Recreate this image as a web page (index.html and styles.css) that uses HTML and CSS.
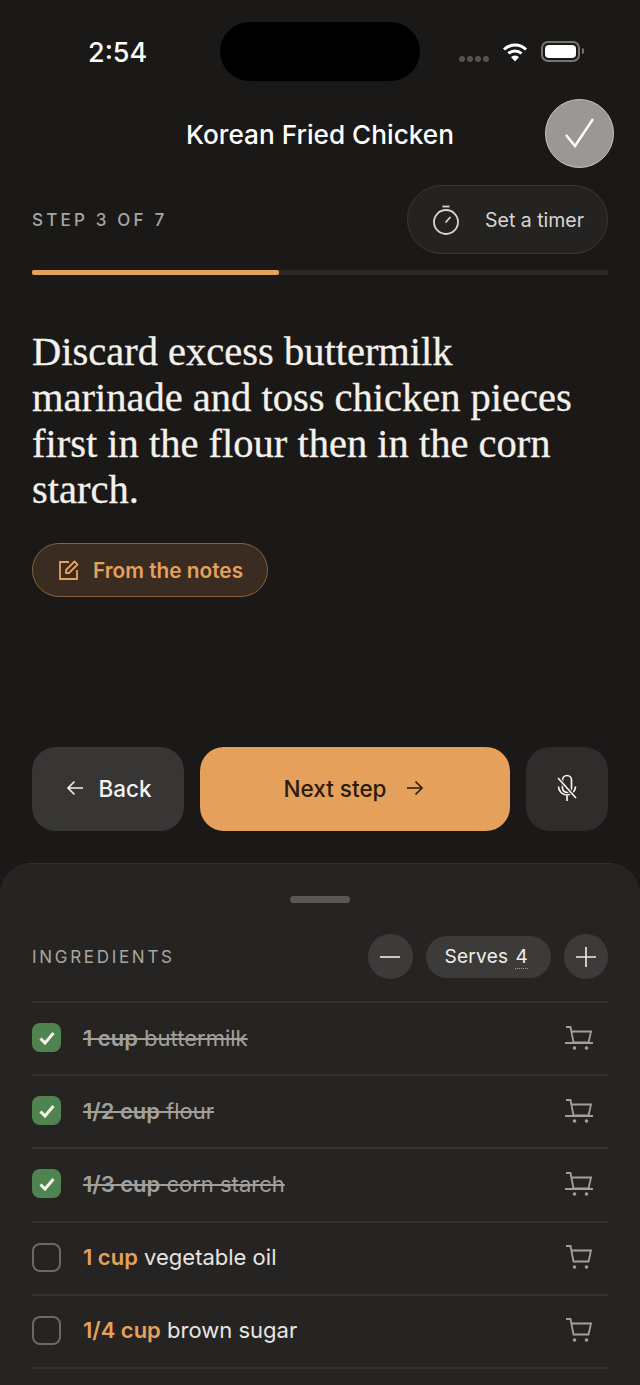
FILE: index.html
```html
<!DOCTYPE html>
<html lang="en">
<head>
  <meta charset="UTF-8" />
  <meta name="viewport" content="width=device-width, initial-scale=1.0"/>
  <title>Korean Fried Chicken</title>
  <link rel="stylesheet" href="styles.css">
</head>
<body>
  <div class="status-bar">
    <div class="status-time">2:54</div>
    <div class="island"></div>
    <div class="status-icons">
      <div class="signal"><i></i><i></i><i></i><i></i></div>
      <svg class="wifi" width="26" height="20" viewBox="0 0 26 20">
        <path d="M2 7.500a16 16 0 0 1 22 0" fill="none" stroke="#fff" stroke-width="3"/>
        <path d="M6.500 11.500a9.500 9.500 0 0 1 13 0" fill="none" stroke="#fff" stroke-width="3"/>
        <path d="M13 19.500l-4-4.500a6 6 0 0 1 8 0z" fill="#fff"/>
      </svg>
      <div class="battery"><span></span></div>
    </div>
  </div>

  <div class="title-bar">
    <h1 class="title">Korean Fried Chicken</h1>
    <button class="done-button">
      <svg width="36" height="36" viewBox="0 0 36 36" fill="none" stroke="#fff" stroke-width="2.4">
        <path d="M4 19l9 11L31 3"/>
      </svg>
    </button>
  </div>

  <div class="step-row">
    <div class="step-label">STEP 3 OF 7</div>
    <button class="timer-button">
      <svg width="28" height="32" viewBox="0 0 28 32" fill="none" stroke="#d9d6d2" stroke-width="1.8">
        <circle cx="14" cy="18" r="12"/>
        <path d="M10.500 2.500h7"/>
        <path d="M14 18l4-4.500" stroke-linecap="round"/>
      </svg>
      <span>Set a timer</span>
    </button>
  </div>

  <div class="progress"><div class="progress-fill" style="width: 42.9%"></div></div>

  <p class="step-text">Discard excess buttermilk marinade and toss chicken pieces first in the flour then in the corn starch.</p>

  <button class="notes-button">
    <svg width="22" height="22" viewBox="0 0 22 22" fill="none" stroke="#e5a05c" stroke-width="1.8">
      <path d="M11 3H2v17h17v-9"/>
      <path d="M8 11L16.500 2.500l3 3L11 14H8z" stroke-linejoin="round"/>
    </svg>
    <span>From the notes</span>
  </button>

  <div class="actions">
    <button class="action back-button">
      <svg width="18" height="16" viewBox="0 0 18 16" fill="none" stroke="#f5f3f0" stroke-width="1.6">
        <path d="M17 8H2M8.500 1.500L2 8l6.500 6.500"/>
      </svg>
      <span>Back</span>
    </button>
    <button class="action next-button">
      <span>Next step</span>
      <svg width="18" height="16" viewBox="0 0 18 16" fill="none" stroke="#2a1c0e" stroke-width="1.6">
        <path d="M1 8h15M9.500 1.500L16 8l-6.500 6.500"/>
      </svg>
    </button>
    <button class="action mic-button">
      <svg width="22" height="28" viewBox="0 0 22 28" fill="none" stroke="#f5f3f0" stroke-width="1.7">
        <rect x="6.500" y="1.500" width="9" height="17" rx="4.500"/>
        <path d="M2.500 12.500a8.500 8.500 0 0 0 17 0M11 21v6"/>
        <path d="M2 4l18 20" stroke="#2f2d2c" stroke-width="4"/>
        <path d="M2 4l18 20"/>
      </svg>
    </button>
  </div>

  <div class="sheet">
    <div class="sheet-handle"></div>
    <div class="sheet-head">
      <div class="sheet-label">INGREDIENTS</div>
      <div class="serves">
        <button class="round-button">
          <svg width="20" height="20" viewBox="0 0 20 20" stroke="#efedea" stroke-width="1.6"><path d="M0 10h20"/></svg>
        </button>
        <div class="serves-pill">Serves <span class="serves-count">4</span></div>
        <button class="round-button">
          <svg width="20" height="20" viewBox="0 0 20 20" stroke="#efedea" stroke-width="1.6"><path d="M0 10h20M10 0v20"/></svg>
        </button>
      </div>
    </div>

    <ul class="ingredients">
      <li class="ingredient checked">
        <span class="checkbox"><svg width="16" height="14" viewBox="0 0 16 14" fill="none" stroke="#f3f5e8" stroke-width="3"><path d="M1.500 7.500L6 12l8.500-10"/></svg></span>
        <span class="ingredient-text"><b>1 cup</b> buttermilk</span>
        <svg class="cart" width="30" height="24" viewBox="0 0 30 24"><use href="#cart-shape"/><path d="M1 17h28" stroke="#a3a09c" stroke-width="2"/></svg>
      </li>
      <li class="ingredient checked">
        <span class="checkbox"><svg width="16" height="14" viewBox="0 0 16 14" fill="none" stroke="#f3f5e8" stroke-width="3"><path d="M1.500 7.500L6 12l8.500-10"/></svg></span>
        <span class="ingredient-text"><b>1/2 cup</b> flour</span>
        <svg class="cart" width="30" height="24" viewBox="0 0 30 24"><use href="#cart-shape"/><path d="M1 17h28" stroke="#a3a09c" stroke-width="2"/></svg>
      </li>
      <li class="ingredient checked">
        <span class="checkbox"><svg width="16" height="14" viewBox="0 0 16 14" fill="none" stroke="#f3f5e8" stroke-width="3"><path d="M1.500 7.500L6 12l8.500-10"/></svg></span>
        <span class="ingredient-text"><b>1/3 cup</b> corn starch</span>
        <svg class="cart" width="30" height="24" viewBox="0 0 30 24"><use href="#cart-shape"/><path d="M1 17h28" stroke="#a3a09c" stroke-width="2"/></svg>
      </li>
      <li class="ingredient">
        <span class="checkbox"></span>
        <span class="ingredient-text"><b>1 cup</b> vegetable oil</span>
        <svg class="cart" width="30" height="24" viewBox="0 0 30 24"><use href="#cart-shape"/></svg>
      </li>
      <li class="ingredient">
        <span class="checkbox"></span>
        <span class="ingredient-text"><b>1/4 cup</b> brown sugar</span>
        <svg class="cart" width="30" height="24" viewBox="0 0 30 24"><use href="#cart-shape"/></svg>
      </li>
    </ul>
  </div>

  <svg class="defs" width="0" height="0">
    <defs>
      <g id="cart-shape">
        <path d="M2 1h4.500l3 15.500h15L27 5.500H7" fill="none" stroke="#a3a09c" stroke-width="1.8"/>
        <circle cx="10.500" cy="22" r="1.800" fill="#a3a09c"/>
        <circle cx="22.500" cy="22" r="1.800" fill="#a3a09c"/>
      </g>
    </defs>
  </svg>
</body>
</html>
```

FILE: styles.css
```css
html, body {
  margin: 0;
  padding: 0;
  height: 100%;
  overflow: hidden;
  background: #1a1918;
  color: #fff;
  font-family: 'Inter', 'Liberation Sans', sans-serif;
}

button {
  font-family: inherit;
  border: none;
  padding: 0;
  cursor: pointer;
}

/* status bar */
.status-bar {
  display: flex;
  align-items: center;
  height: 59px;
  padding: 22px 56px 0 88px;
}

.status-time {
  width: 132px;
  padding-top: 2px;
  font-size: 27px;
  font-weight: 500;
}

.island {
  width: 200px;
  height: 59px;
  border-radius: 30px;
  background: #000;
}

.status-icons {
  display: flex;
  align-items: center;
  margin-left: 39px;
}

.signal {
  display: flex;
  gap: 2px;
  margin-top: 14px;
  margin-right: 13px;
}

.signal i {
  width: 6px;
  height: 6px;
  border-radius: 50%;
  background: #55534f;
}

.wifi {
  margin-right: 13px;
}

.battery {
  position: relative;
  display: flex;
  box-sizing: border-box;
  width: 39px;
  height: 21px;
  padding: 2px;
  border: 2px solid #777572;
  border-radius: 7px;
}

.battery span {
  flex: 1;
  background: #fff;
  border-radius: 4px;
}

.battery::after {
  content: '';
  position: absolute;
  right: -6px;
  top: 5px;
  width: 2px;
  height: 6px;
  border-radius: 0 2px 2px 0;
  background: #777572;
}

/* title */
.title-bar {
  position: relative;
  display: flex;
  justify-content: center;
  padding-top: 37px;
}

.title {
  margin: 0;
  font-size: 26.2px;
  line-height: 34px;
  font-weight: 500;
}

.done-button {
  position: absolute;
  top: 18px;
  left: 545px;
  display: flex;
  align-items: center;
  justify-content: center;
  width: 69px;
  height: 69px;
  border-radius: 50%;
  background: #9a9794;
  border: 1px solid #c9c7c4;
  box-sizing: border-box;
}

/* step row */
.step-row {
  display: flex;
  align-items: center;
  justify-content: space-between;
  margin-top: 33px;
  padding: 0 32px;
}

.step-label {
  font-size: 17px;
  font-weight: 500;
  letter-spacing: 3.2px;
  color: #a9a6a2;
}

.timer-button {
  display: flex;
  align-items: center;
  gap: 25px;
  box-sizing: border-box;
  width: 201px;
  height: 69px;
  padding-left: 24px;
  border: 1px solid #3a3836;
  border-radius: 35px;
  background: #242322;
  color: #d9d6d2;
  font-size: 19.5px;
}

.progress {
  height: 5px;
  margin: 16px 32px 0;
  background: #2c2a29;
}

.progress-fill {
  height: 100%;
  background: #e5a05c;
  border-radius: 2px;
}

.step-text {
  margin: 54px 32px 0 32px;
  font-family: 'Liberation Serif', serif;
  font-size: 40.5px;
  line-height: 46px;
  color: #f4f1ec;
  -webkit-text-stroke: 0.3px #f4f1ec;
}

.notes-button {
  display: flex;
  align-items: center;
  gap: 13px;
  box-sizing: border-box;
  width: 236px;
  height: 54px;
  margin: 30px 0 0 32px;
  padding-left: 25px;
  border: 1px solid #87643f;
  border-radius: 27px;
  background: #3a2c20;
  color: #e5a05c;
  font-size: 20.8px;
  font-weight: 600;
}

/* actions */
.actions {
  display: flex;
  gap: 16px;
  margin-top: 150px;
  padding: 0 32px;
}

.action {
  display: flex;
  align-items: center;
  justify-content: center;
  height: 84px;
  padding-bottom: 2px;
  border-radius: 24px;
  font-size: 22.5px;
  font-weight: 500;
}

.back-button {
  width: 152px;
  gap: 14px;
  padding-left: 2px;
  background: #383635;
  color: #f5f3f0;
}

.next-button {
  width: 310px;
  gap: 19px;
  padding-right: 3px;
  background: #e5a05c;
  color: #2a1c0e;
}

.mic-button {
  width: 82px;
  background: #2f2d2c;
}

/* ingredients sheet */
.sheet {
  box-sizing: border-box;
  margin-top: 32px;
  height: 522px;
  padding: 0 32px;
  background: #262423;
  border-top: 1px solid #33312f;
  border-radius: 32px 32px 0 0;
}

.sheet-handle {
  width: 60px;
  height: 7px;
  margin: 32px auto 0;
  border-radius: 4px;
  background: #5a5855;
}

.sheet-head {
  display: flex;
  align-items: center;
  justify-content: space-between;
  height: 45px;
  margin-top: 31px;
}

.sheet-label {
  font-size: 17px;
  letter-spacing: 2.7px;
  color: #a9a6a2;
}

.serves {
  display: flex;
  align-items: center;
  gap: 13px;
}

.round-button {
  display: flex;
  align-items: center;
  justify-content: center;
  width: 44.5px;
  height: 45px;
  border-radius: 50%;
  background: #3d3b3a;
}

.serves-pill {
  display: flex;
  align-items: center;
  gap: 7px;
  box-sizing: border-box;
  width: 125px;
  height: 42px;
  padding-left: 19px;
  border-radius: 21px;
  background: #3d3b3a;
  color: #efedea;
  font-size: 19px;
  letter-spacing: 0.3px;
}

.serves-count {
  border-bottom: 1px dotted #a09d99;
  line-height: 23px;
}

.ingredients {
  margin: 22px 0 0;
  padding: 0;
  list-style: none;
  border-bottom: 2px solid #33312f;
}

.ingredient {
  display: flex;
  align-items: center;
  box-sizing: border-box;
  height: 73.2px;
  padding-bottom: 2px;
  border-top: 2px solid #33312f;
}

.checkbox {
  display: flex;
  align-items: center;
  justify-content: center;
  box-sizing: border-box;
  width: 29px;
  height: 29px;
  margin-right: 22px;
  border: 2px solid #6b6966;
  border-radius: 8px;
}

.checked .checkbox {
  border: none;
  background: #4f8450;
}

.ingredient-text {
  flex: 1;
  font-size: 22px;
  color: #e8e5e1;
}

.ingredient-text b {
  font-weight: 600;
  color: #e5a05c;
}

.checked .ingredient-text {
  color: #a3a09c;
  text-decoration: line-through;
}

.checked .ingredient-text b {
  color: #a3a09c;
}

.cart {
  margin-right: 14px;
}

.defs {
  position: absolute;
}
```
